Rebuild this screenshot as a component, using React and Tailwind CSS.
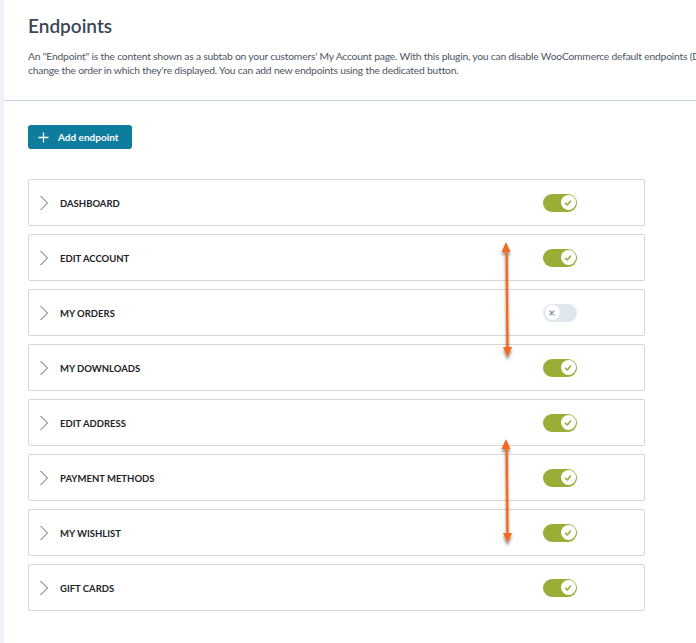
import React from "react";

const rows = [
  { label: "DASHBOARD", on: true },
  { label: "EDIT ACCOUNT", on: true },
  { label: "MY ORDERS", on: false },
  { label: "MY DOWNLOADS", on: true },
  { label: "EDIT ADDRESS", on: true },
  { label: "PAYMENT METHODS", on: true },
  { label: "MY WISHLIST", on: true },
  { label: "GIFT CARDS", on: true },
];

function Chevron() {
  return (
    <svg width="10" height="16" viewBox="0 0 10 16" className="shrink-0">
      <path d="M1.5 1 L8.5 8 L1.5 15" fill="none" stroke="#5a5f6a" strokeWidth="1" />
    </svg>
  );
}

function Toggle({ on }) {
  if (on) {
    return (
      <div className="w-[34px] h-[18px] rounded-full bg-[#99ad37] flex items-center justify-end pr-[1.5px]">
        <div className="w-[15px] h-[15px] rounded-full bg-white flex items-center justify-center">
          <svg width="8" height="8" viewBox="0 0 8 8">
            <path d="M1.5 4.2 L3.3 6 L6.5 2" fill="none" stroke="#99ad37" strokeWidth="1.6" strokeLinecap="round" strokeLinejoin="round" />
          </svg>
        </div>
      </div>
    );
  }
  return (
    <div className="w-[34px] h-[18px] rounded-full bg-[#dfe6ee] flex items-center justify-start pl-[1.5px]">
      <div className="w-[15px] h-[15px] rounded-full bg-white flex items-center justify-center">
        <svg width="8" height="8" viewBox="0 0 8 8">
          <path d="M2.2 2.2 L5.8 5.8 M5.8 2.2 L2.2 5.8" fill="none" stroke="#8a94a3" strokeWidth="1.5" strokeLinecap="round" />
        </svg>
      </div>
    </div>
  );
}

function Arrow({ top, height }) {
  return (
    <svg
      className="absolute"
      style={{ left: 496, top: top - 4, width: 22, height: height + 14 }}
      viewBox={`0 0 22 ${height + 14}`}
    >
      <defs>
        <filter id={`sh${top}`} x="-50%" y="-10%" width="200%" height="130%">
          <feGaussianBlur in="SourceAlpha" stdDeviation="1.8" />
          <feOffset dx="0" dy="3" result="b" />
          <feComponentTransfer><feFuncA type="linear" slope="0.45" /></feComponentTransfer>
          <feMerge><feMergeNode /><feMergeNode in="SourceGraphic" /></feMerge>
        </filter>
      </defs>
      <g filter={`url(#sh${top})`} fill="#f26a21" stroke="none">
        <polygon points={`10,4 14.5,14 5.5,14`} />
        <rect x="9.8" y="12" width="2.4" height={height - 18} transform={`rotate(-0.5 11 ${height / 2})`} />
        <polygon points={`11.5,${height + 4} 16,${height - 6} 7,${height - 6}`} />
      </g>
    </svg>
  );
}

export default function App() {
  return (
    <div
      className="relative flex w-[696px] h-[643px] overflow-hidden bg-white"
      style={{ fontFamily: 'Lato, "Open Sans", Arial, sans-serif' }}
    >
      <div className="w-[4px] shrink-0 bg-[#eef1f6]" />
      <div className="flex-1 flex flex-col min-w-0">
        <div className="border-b border-[#c9d5e1] pl-[24px] pt-[14px] h-[101px] overflow-hidden">
          <h1 className="text-[19px] leading-[24px] font-semibold text-[#3b4656]">Endpoints</h1>
          <div className="mt-[11px] text-[10.3px] leading-[14px] tracking-[-0.2px] text-[#4c5665] whitespace-nowrap">
            <p>An "Endpoint" is the content shown as a subtab on your customers' My Account page. With this plugin, you can disable WooCommerce default endpoints (Da</p>
            <p>change the order in which they're displayed. You can add new endpoints using the dedicated button.</p>
          </div>
        </div>
        <div className="pl-[24px] pt-[24px]">
          <button className="flex items-center h-[24px] w-[104px] rounded-[3px] bg-[#0e7c9d] text-white pl-[10px]">
            <svg width="11" height="11" viewBox="0 0 11 11" className="shrink-0">
              <path d="M5.5 0.5 V10.5 M0.5 5.5 H10.5" stroke="#fff" strokeWidth="1.3" />
            </svg>
            <span className="ml-[9px] text-[10px] font-bold">Add endpoint</span>
          </button>
          <div className="mt-[31px] -translate-y-[1px] flex flex-col gap-[8px] w-[617px]">
            {rows.map((r) => (
              <div
                key={r.label}
                className="h-[47px] border border-[#d7d7d7] rounded-[2px] flex items-center pl-[10px] pr-[67px]"
              >
                <Chevron />
                <span className="ml-[11px] flex-1 text-[9.5px] font-bold text-[#1d2327] translate-y-[1.5px]">{r.label}</span>
                <Toggle on={r.on} />
              </div>
            ))}
          </div>
        </div>
      </div>
      <Arrow top={242} height={115} />
      <Arrow top={439} height={104} />
    </div>
  );
}
